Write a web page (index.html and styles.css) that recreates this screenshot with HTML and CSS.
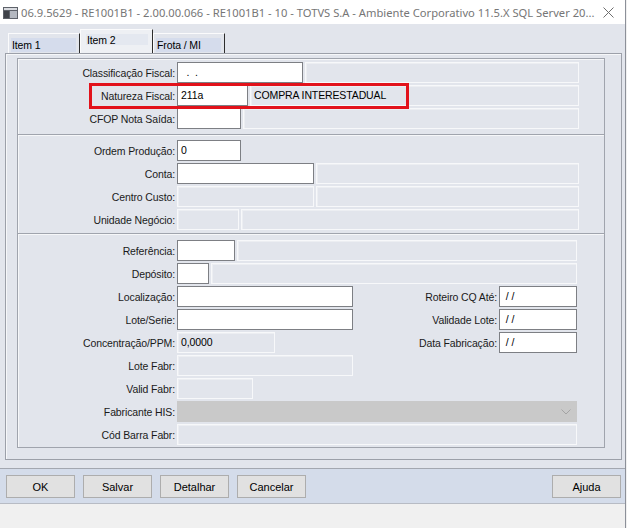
FILE: index.html
```html
<!DOCTYPE html>
<html lang="pt-BR">

<head>
  <meta charset="UTF-8">
  <title>RE1001B1 - Item 2</title>
  <link rel="stylesheet" href="styles.css">
</head>

<body>
  <div class="window">
    <div class="titlebar">
      <svg class="app-icon" width="15" height="12" viewBox="0 0 15 12">
        <rect x="0" y="0" width="15" height="12" fill="#5e626a" />
        <rect x="1" y="1" width="13" height="2" fill="#d9dbe0" />
        <rect x="7" y="4" width="7" height="7" fill="#b4b8c0" />
        <rect x="1" y="4" width="5" height="7" fill="#3f4249" />
      </svg>
      <span class="title">06.9.5629 - RE1001B1 - 2.00.00.066 - RE1001B1 - 10 - TOTVS S.A - Ambiente Corporativo 11.5.X SQL Server 20...</span>
      <svg class="close" width="11" height="11" viewBox="0 0 11 11">
        <path d="M0.5 0.5 L10.5 10.5 M10.5 0.5 L0.5 10.5" stroke="#6e6e6e" stroke-width="1" fill="none" />
      </svg>
    </div>

    <div class="client">
      <div class="tabs">
        <div class="tab"><span>Item 1</span></div>
        <div class="tab active"><span>Item 2</span></div>
        <div class="tab"><span>Frota / MI</span></div>
      </div>

      <div class="frame">
        <!-- fiscal -->
        <div class="group g1">
          <div class="row">
            <label>Classificação Fiscal:</label>
            <div class="field w126">&nbsp;&nbsp;.&nbsp;&nbsp;.</div>
            <div class="field off grow"></div>
          </div>
          <div class="row">
            <div class="highlight"></div>
            <label>Natureza Fiscal:</label>
            <div class="field w71">211a</div>
            <div class="field off grow">COMPRA INTERESTADUAL</div>
          </div>
          <div class="row">
            <label>CFOP Nota Saída:</label>
            <div class="field w64"></div>
            <div class="field off grow"></div>
          </div>
        </div>

        <!-- producao -->
        <div class="group g2">
          <div class="row">
            <label>Ordem Produção:</label>
            <div class="field w64">0</div>
          </div>
          <div class="row">
            <label>Conta:</label>
            <div class="field w137"></div>
            <div class="field off grow"></div>
          </div>
          <div class="row">
            <label>Centro Custo:</label>
            <div class="field off w137"></div>
            <div class="field off grow"></div>
          </div>
          <div class="row">
            <label>Unidade Negócio:</label>
            <div class="field off w62"></div>
            <div class="field off grow"></div>
          </div>
        </div>

        <!-- estoque -->
        <div class="group g3">
          <div class="row">
            <label>Referência:</label>
            <div class="field w58"></div>
            <div class="field off grow"></div>
          </div>
          <div class="row">
            <label>Depósito:</label>
            <div class="field w32"></div>
            <div class="field off grow"></div>
          </div>
          <div class="row">
            <label>Localização:</label>
            <div class="field w176"></div>
            <div class="side">
              <label>Roteiro CQ Até:</label>
              <div class="field w78">&nbsp;/ /</div>
            </div>
          </div>
          <div class="row">
            <label>Lote/Serie:</label>
            <div class="field w176"></div>
            <div class="side">
              <label>Validade Lote:</label>
              <div class="field w78">&nbsp;/ /</div>
            </div>
          </div>
          <div class="row">
            <label>Concentração/PPM:</label>
            <div class="field off w98">0,0000</div>
            <div class="side">
              <label>Data Fabricação:</label>
              <div class="field w78">&nbsp;/ /</div>
            </div>
          </div>
          <div class="row">
            <label>Lote Fabr:</label>
            <div class="field off w176"></div>
          </div>
          <div class="row">
            <label>Valid Fabr:</label>
            <div class="field off w76"></div>
          </div>
          <div class="row">
            <label>Fabricante HIS:</label>
            <div class="field combo grow">
              <svg class="chevron" width="10" height="6" viewBox="0 0 10 6">
                <path d="M0.5 0.5 L5 5 L9.5 0.5" stroke="#a4a4a4" stroke-width="1" fill="none" />
              </svg>
            </div>
          </div>
          <div class="row">
            <label>Cód Barra Fabr:</label>
            <div class="field off grow"></div>
          </div>
        </div>
      </div>

      <div class="buttonbar">
        <button>OK</button>
        <button>Salvar</button>
        <button>Detalhar</button>
        <button>Cancelar</button>
        <button class="help">Ajuda</button>
      </div>
    </div>
  </div>
</body>

</html>
```

FILE: styles.css
```css
body {
  margin: 0;
  font-family: "Liberation Sans", Arial, sans-serif;
  font-size: 10.5px;
  letter-spacing: -0.12px;
  color: #000;
  background: #f0f0f0;
}

.window {
  width: 625px;
  height: 528px;
  border-right: 1px solid #8c9099;
}

/* title bar */
.titlebar {
  height: 24px;
  background: #fff;
  display: flex;
  align-items: center;
  padding-left: 3px;
}

.app-icon {
  margin-top: 1px;
}

.title {
  margin-left: 3px;
  font-family: "Noto Sans", "Open Sans", sans-serif;
  font-size: 11.2px;
  letter-spacing: 0;
  color: #767676;
  white-space: nowrap;
}

.close {
  margin-left: auto;
  margin-right: 11px;
}

/* client area */
.client {
  background: #e2e5ec;
}

.tabs {
  height: 29px;
  display: flex;
  align-items: flex-end;
  padding-left: 8px;
}

.tab {
  height: 20px;
  box-sizing: border-box;
  border-top: 1px solid #fbfbfc;
  border-left: 1px solid #fbfbfc;
  border-right: 1px solid #2d2d2d;
  padding: 4px 3px 1px 2px;
}

.tab:nth-child(1) {
  width: 72px;
}

.tab:nth-child(3) {
  width: 72px;
}

.tab span {
  display: block;
  height: 14px;
  line-height: 15px;
  padding-left: 1px;
  background: #d5dcec;
}

.tab.active {
  width: 73px;
  height: 24px;
  background: #eef0f4;
  padding: 4px 4px 8px 5px;
}

.tab.active span {
  line-height: 12px;
  height: 11px;
  background: #e4e8f0;
}

.frame {
  width: 617px;
  box-sizing: border-box;
  margin-left: 5px;
  border: 1px solid #9ca0a9;
  box-shadow: inset 1px 1px 0 #f6f7f9;
  padding: 4px 16px 11px 11px;
}

.group {
  border: 1px solid #a0a4ad;
  box-shadow: inset 1px 1px 0 #f6f7f9;
  display: flex;
  flex-direction: column;
  gap: 2px;
}

.g1 {
  padding: 3px 25px 5px 0;
}

.g2 {
  border-top: 0;
  padding: 5px 25px 3px 0;
}

.g3 {
  border-top: 0;
  padding: 6px 27px 2px 0;
}

.row {
  position: relative;
  display: flex;
  align-items: center;
  gap: 2px;
  height: 21px;
}

.row label {
  width: 157px;
  flex: none;
  text-align: right;
  color: #1a1a1a;
}

.side {
  margin-left: auto;
  display: flex;
  align-items: center;
  gap: 2px;
}

.side label {
  width: auto;
}

.field {
  height: 21px;
  box-sizing: border-box;
  flex: none;
  border: 1px solid #7d7f84;
  background: #fff;
  padding: 0 3px;
  line-height: 19px;
  white-space: nowrap;
  overflow: hidden;
}

.field.off {
  background: #e2e5ec;
  border-color: #f7f8fa;
  box-shadow: inset 1px 1px 0 #eceef2;
}

.field.combo {
  position: relative;
  background: #c9c9c9;
  border-color: #c9c9c9;
}

.chevron {
  position: absolute;
  right: 5px;
  top: 7px;
}

.grow {
  flex: 1;
}

.w32 { width: 32px; }
.w58 { width: 58px; }
.w62 { width: 62px; }
.w64 { width: 64px; }
.w71 { width: 71px; }
.w76 { width: 76px; }
.w78 { width: 78px; }
.w98 { width: 98px; }
.w126 { width: 126px; }
.w137 { width: 137px; }
.w176 { width: 176px; }

/* red marker around Natureza Fiscal */
.highlight {
  position: absolute;
  left: 71px;
  top: -2px;
  width: 320px;
  height: 26px;
  box-sizing: border-box;
  border: 3px solid #e2121b;
  z-index: 1;
  pointer-events: none;
}

/* bottom buttons */
.buttonbar {
  margin-top: 8px;
  border-top: 1px solid #a3a7b0;
  border-bottom: 1px solid #b7bbc4;
  background: #d4dcea;
  display: flex;
  gap: 8px;
  padding: 6px 4px 5px 6px;
}

.buttonbar button {
  width: 69px;
  height: 23px;
  margin: 0;
  border: 1px solid #adadad;
  background: #e1e1e1;
  font-family: "Liberation Sans", Arial, sans-serif;
  font-size: 11px;
  color: #000;
}

.buttonbar .help {
  margin-left: auto;
}
```
